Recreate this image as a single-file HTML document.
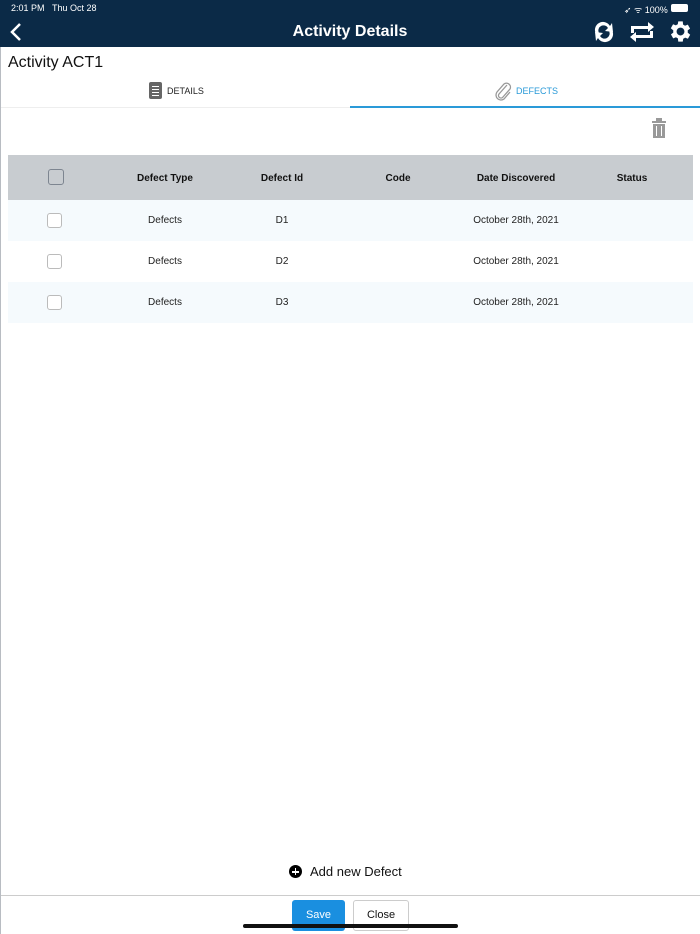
<!DOCTYPE html>
<html><head><style>
*{margin:0;padding:0;box-sizing:border-box}
body{width:700px;height:934px;position:relative;background:#fff;font-family:"Liberation Sans",sans-serif;overflow:hidden}
.abs{position:absolute}
.hdr{left:0;top:0;width:700px;height:47px;background:#0b2a47;color:#fff}
.th{font-size:10px;font-weight:bold;color:#111;text-align:center;width:120px}
.td{font-size:10px;color:#222;text-align:center;width:120px}
.cb{width:15px;height:15px;border:1.5px solid #bbb;border-radius:3px;background:#fff}
</style></head><body>
<div class="abs" style="left:0;top:47px;width:1px;height:887px;background:#b8bcc2"></div>
<div class="abs hdr">
<div class="abs" style="left:11px;top:3px;font-size:9px">2:01 PM&nbsp;&nbsp;&nbsp;Thu Oct 28</div>
<div class="abs" style="left:624px;top:3px;font-size:9px">➶ ᯤ 100%</div>
<div class="abs" style="left:671px;top:4px;width:17px;height:8px;background:#fff;border-radius:2px"></div>
<svg class="abs" style="left:9px;top:22px" width="14" height="20"><path d="M11 2 L3 10 L11 18" stroke="#fff" stroke-width="2.5" fill="none"/></svg>
<div class="abs" style="left:0;width:700px;top:23px;text-align:center;font-size:16px;font-weight:bold">Activity Details</div>
<svg class="abs" style="left:591px;top:20px" width="26" height="24"><path d="M5 14 A8 8 0 0 1 19 6 L21 3 L22 12 L14 11 L17 8 A5 5 0 0 0 8 13 Z M21 10 A8 8 0 0 1 7 18 L5 21 L4 12 L12 13 L9 16 A5 5 0 0 0 18 11Z" fill="#fff"/></svg>
<svg class="abs" style="left:628px;top:20px" width="28" height="24"><path d="M3 13 V6 H20 V2 L26 7 L20 12 V9 H6 V13Z M25 11 V18 H8 V22 L2 17 L8 12 V15 H22 V11Z" fill="#fff"/></svg>
<svg class="abs" style="left:667px;top:18px" width="27" height="27" viewBox="0 0 24 24"><path fill="#fff" d="M19.4 13a7.5 7.5 0 0 0 0-2l2.1-1.6-2-3.5-2.5 1a7 7 0 0 0-1.7-1L15 3h-4l-.4 2.6a7 7 0 0 0-1.7 1l-2.5-1-2 3.5L6.6 11a7.5 7.5 0 0 0 0 2l-2.1 1.6 2 3.5 2.5-1a7 7 0 0 0 1.7 1L11 21h4l.4-2.6a7 7 0 0 0 1.7-1l2.5 1 2-3.5zM13 15.5a3.5 3.5 0 1 1 0-7 3.5 3.5 0 0 1 0 7z" transform="translate(-1 0)"/></svg>
</div>
<div class="abs" style="left:8px;top:54px;font-size:16px;color:#111">Activity ACT1</div>
<div class="abs" style="left:149px;top:82px;width:13px;height:17px;background:#666;border-radius:2px"></div>
<div class="abs" style="left:152px;top:86px;width:7px;height:1px;background:#fff;box-shadow:0 3px #fff,0 6px #fff,0 9px #fff"></div>
<div class="abs" style="left:167px;top:86px;font-size:9px;color:#222">DETAILS</div>
<svg class="abs" style="left:493px;top:81px" width="20" height="20"><path d="M14 4 L6 13 A2.5 2.5 0 0 0 10 16 L17 8 A4 4 0 0 0 11 3 L4 11 A5 5 0 0 0 11 18 L17 11" stroke="#999" stroke-width="1.3" fill="none"/></svg>
<div class="abs" style="left:516px;top:86px;font-size:9px;color:#2a9ad8">DEFECTS</div>
<div class="abs" style="left:1px;top:107px;width:349px;height:1px;background:#eee"></div>
<div class="abs" style="left:350px;top:106px;width:350px;height:2px;background:#2a9ad8"></div>
<svg class="abs" style="left:651px;top:118px" width="16" height="21"><rect x="1" y="3" width="14" height="2" fill="#999"/><rect x="5" y="0" width="6" height="3" fill="#999"/><rect x="2" y="6" width="12" height="14" fill="#999"/><rect x="5" y="8" width="1" height="10" fill="#fff"/><rect x="10" y="8" width="1" height="10" fill="#fff"/></svg>
<div class="abs" style="left:8px;top:155px;width:685px;height:45px;background:#c8ccd0"></div>
<div class="abs cb" style="left:48px;top:169px;width:16px;height:16px;border-color:#7d8590;background:#c8ccd0"></div>
<div class="abs th" style="left:105px;top:173px">Defect Type</div>
<div class="abs th" style="left:222px;top:173px">Defect Id</div>
<div class="abs th" style="left:338px;top:173px">Code</div>
<div class="abs th" style="left:456px;top:173px">Date Discovered</div>
<div class="abs th" style="left:572px;top:173px">Status</div>
<div class="abs" style="left:8px;top:200px;width:685px;height:41px;background:#f5fafd"></div>
<div class="abs" style="left:8px;top:282px;width:685px;height:41px;background:#f5fafd"></div>
<div class="abs cb" style="left:47px;top:213px"></div>
<div class="abs td" style="left:105px;top:215px">Defects</div><div class="abs td" style="left:222px;top:215px">D1</div><div class="abs td" style="left:456px;top:215px">October 28th, 2021</div>
<div class="abs cb" style="left:47px;top:254px"></div>
<div class="abs td" style="left:105px;top:256px">Defects</div><div class="abs td" style="left:222px;top:256px">D2</div><div class="abs td" style="left:456px;top:256px">October 28th, 2021</div>
<div class="abs cb" style="left:47px;top:295px"></div>
<div class="abs td" style="left:105px;top:297px">Defects</div><div class="abs td" style="left:222px;top:297px">D3</div><div class="abs td" style="left:456px;top:297px">October 28th, 2021</div>
<div class="abs" style="left:289px;top:865px;width:13px;height:13px;border-radius:50%;background:#000"></div>
<div class="abs" style="left:292px;top:871px;width:7px;height:1.6px;background:#fff"></div>
<div class="abs" style="left:294.7px;top:868px;width:1.6px;height:7px;background:#fff"></div>
<div class="abs" style="left:310px;top:864px;font-size:13px;color:#111">Add new Defect</div>
<div class="abs" style="left:1px;top:895px;width:699px;height:1px;background:#ccc"></div>
<div class="abs" style="left:292px;top:900px;width:53px;height:31px;background:#1a8fe0;border-radius:3px;color:#fff;font-size:11px;text-align:center;line-height:31px">Save</div>
<div class="abs" style="left:353px;top:900px;width:56px;height:31px;border:1px solid #ccc;border-radius:3px;color:#111;font-size:11px;text-align:center;line-height:29px;background:#fff">Close</div>
<div class="abs" style="left:243px;top:924px;width:215px;height:4px;background:#111;border-radius:2px"></div>
</body></html>
